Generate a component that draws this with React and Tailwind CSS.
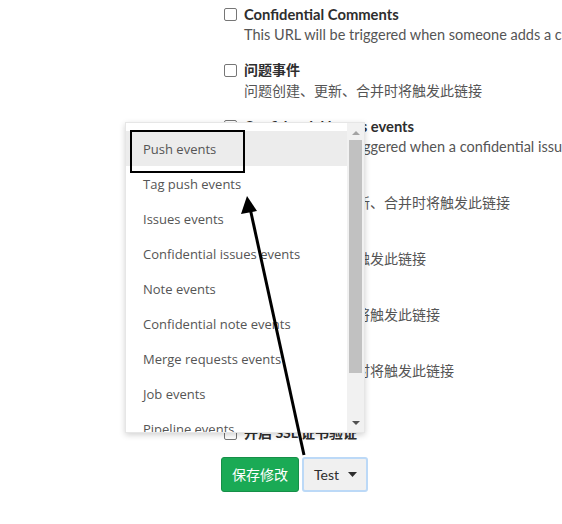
import React from "react";

const rows = [
  { label: "Confidential Comments", desc: "This URL will be triggered when someone adds a comment on a confidential issue", en: true, enDesc: true },
  { label: "问题事件", desc: "问题创建、更新、合并时将触发此链接" },
  { label: "Confidential issues events", desc: "This URL will be triggered when a confidential issue is created/updated/merged", en: true, enDesc: true },
  { label: "合并请求事件", desc: "合并请求创建、更新、合并时将触发此链接" },
  { label: "作业事件", desc: "作业状态变化时将触发此链接" },
  { label: "流水线事件", desc: "流水线状态变化时将触发此链接" },
  { label: "维基页面事件", desc: "维基页面创建更新时将触发此链接" },
];

const items = [
  "Push events",
  "Tag push events",
  "Issues events",
  "Confidential issues events",
  "Note events",
  "Confidential note events",
  "Merge requests events",
  "Job events",
  "Pipeline events",
  "Wiki page events",
];

function Box() {
  return <div className="w-[13px] h-[13px] border border-[#767676] rounded-[2px] bg-white shrink-0" />;
}

export default function App() {
  return (
    <div
      className="relative w-[562px] h-[524px] bg-white overflow-hidden text-[14px]"
      style={{ fontFamily: '"Lato", "Noto Sans CJK SC", sans-serif' }}
    >
      <div className="pl-[224px] pt-[4px] whitespace-nowrap">
        {rows.map((r, i) => (
          <div key={i} className="h-[56px]">
            <div className="flex items-center gap-[7px] h-[20px]">
              <Box />
              <span className={`font-bold text-[#2e2e2e] leading-[20px] ${r.en ? "text-[14.75px]" : "text-[14px]"}`}>{r.label}</span>
            </div>
            <div className={`pl-[20px] mt-[1px] leading-[20px] text-[#555] ${r.enDesc ? "text-[14.5px]" : "text-[14px]"}`}>{r.desc}</div>
          </div>
        ))}
        <div className="mt-[27px] flex items-center gap-[7px] h-[20px]">
          <Box />
          <span className="font-bold text-[#2e2e2e] leading-[20px]">开启 SSL 证书验证</span>
        </div>
        <div className="mt-[14px] -ml-[3px] flex gap-[3px]">
          <button className="h-[35px] w-[78px] rounded-[3px] bg-[#1aaa55] border border-[#168f48] text-white text-[14px]">
            保存修改
          </button>
          <button className="h-[35px] w-[66px] rounded-[3px] bg-[#f0f0f0] border-2 border-[#bcd9f7] text-[#2e2e2e] text-[14px] flex items-center pl-[10px] gap-[9px]">
            <span>Test</span>
            <svg width="9" height="5" viewBox="0 0 9 5"><path d="M0 0h9L4.5 5z" fill="#2e2e2e" /></svg>
          </button>
        </div>
      </div>

      {/* dropdown overlay */}
      <div
        className="absolute left-[125px] top-[122px] w-[240px] h-[311px] bg-white border border-[#e6e6e6] shadow-[0_2px_6px_rgba(0,0,0,0.18)] flex overflow-hidden"
        style={{ fontFamily: '"Open Sans", sans-serif' }}
      >
        <div className="flex-1 pt-[8px] overflow-hidden">
          {items.map((t, i) => (
            <div
              key={t}
              className={`h-[35px] flex items-center pl-[17px] pt-[2px] text-[13px] text-[#555] whitespace-nowrap ${i === 0 ? "bg-[#ececec]" : ""}`}
            >
              {t}
            </div>
          ))}
        </div>
        <div className="w-[17px] bg-[#f1f1f1] flex flex-col items-center">
          <div className="h-[17px] flex items-center justify-center pt-[2px]">
            <svg width="8" height="4" viewBox="0 0 8 4"><path d="M4 0L8 4H0z" fill="#a3a3a3" /></svg>
          </div>
          <div className="w-[13px] h-[233px] bg-[#c1c1c1]" />
          <div className="flex-1" />
          <div className="h-[17px] flex items-center justify-center pb-[2px]">
            <svg width="8" height="4" viewBox="0 0 8 4"><path d="M0 0H8L4 4z" fill="#505050" /></svg>
          </div>
        </div>
      </div>

      {/* annotation rectangle */}
      <div className="absolute left-[130px] top-[130px] w-[115px] h-[43px] border-2 border-black" />

      {/* annotation arrow */}
      <svg className="absolute left-0 top-0" width="562" height="524" viewBox="0 0 562 524">
        <line x1="304" y1="455" x2="250" y2="208" stroke="black" strokeWidth="3" />
        <path d="M247 196 L241 214 L257 211 Z" fill="black" />
      </svg>
    </div>
  );
}
